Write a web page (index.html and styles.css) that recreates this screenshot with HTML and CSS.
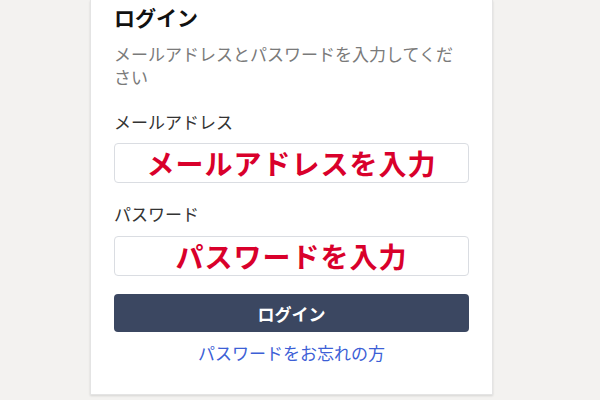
FILE: index.html
```html
<!DOCTYPE html>
<html lang="ja">
<head>
<meta charset="utf-8">
<link rel="stylesheet" href="styles.css">
</head>
<body>
<div class="page">
  <div class="card">
    <h1 class="title">ログイン</h1>
    <p class="subtitle">メールアドレスとパスワードを入力してください</p>
    <label class="label label-email">メールアドレス</label>
    <div class="input input-email">メールアドレスを入力</div>
    <label class="label label-pass">パスワード</label>
    <div class="input input-pass">パスワードを入力</div>
    <button class="btn">ログイン</button>
    <a class="forgot">パスワードをお忘れの方</a>
  </div>
</div>
</body>
</html>
```

FILE: styles.css
```css
html, body {
  margin: 0;
  padding: 0;
  background: #f3f2f0;
  height: 400px;
  overflow: hidden;
}
body {
  font-family: "Noto Sans CJK JP", "Noto Sans", sans-serif;
}
.page {
  display: flex;
  padding-left: 90px;
}
.card {
  width: 355px;
  background: #fff;
  border: 1px solid #e4e4e4;
  border-top: none;
  padding: 2px 23px 30px 23px;
  display: flex;
  flex-direction: column;
  box-shadow: 0 1px 2px rgba(0,0,0,0.12);
}
.title {
  margin: 0;
  font-size: 21px;
  line-height: 30px;
  font-weight: 700;
  color: #111;
}
.subtitle {
  margin: 10px 0 0;
  font-size: 17px;
  line-height: 23px;
  color: #7a7a7a;
}
.label {
  font-size: 17px;
  line-height: 23px;
  color: #333;
}
.label-email { margin-top: 22px; }
.label-pass { margin-top: 19px; }
.input {
  margin-top: 10px;
  height: 38px;
  border: 1px solid #dadde2;
  border-radius: 4px;
  display: flex;
  align-items: center;
  justify-content: center;
  color: #d9002b;
  font-size: 28px;
  font-weight: 700;
  letter-spacing: 1px;
}
.input-pass { margin-top: 11px; }
.btn {
  margin-top: 18px;
  height: 38px;
  border: none;
  border-radius: 4px;
  background: #3b4761;
  color: #fff;
  font-family: inherit;
  font-size: 17px;
  font-weight: 700;
  padding: 0;
}
.forgot {
  margin-top: 9px;
  text-align: center;
  font-size: 17px;
  line-height: 23px;
  color: #3d5fd6;
}
```
